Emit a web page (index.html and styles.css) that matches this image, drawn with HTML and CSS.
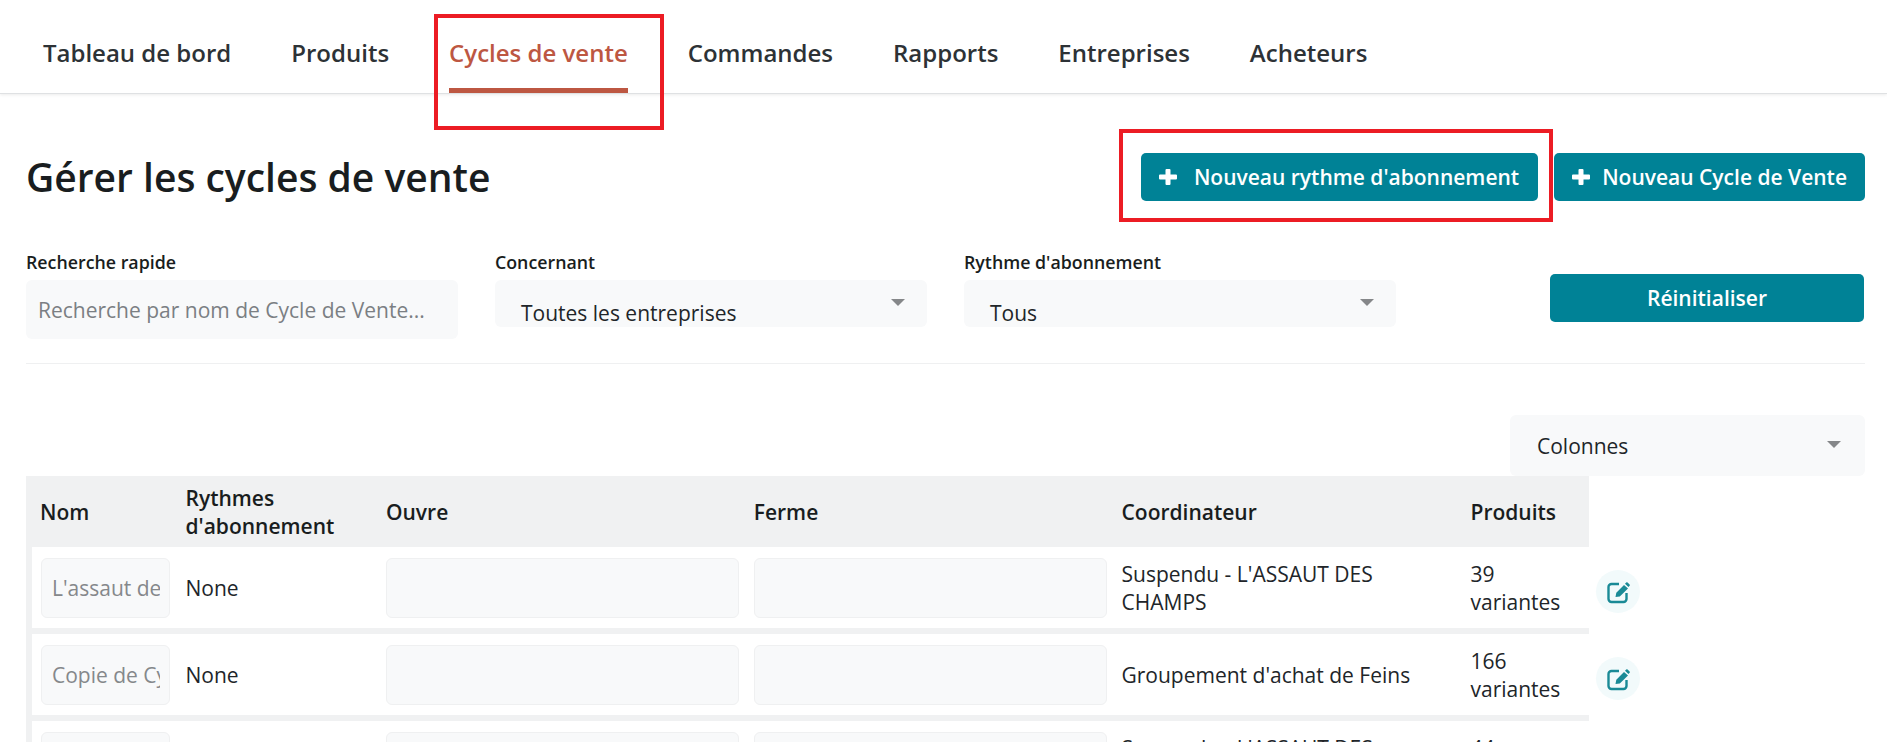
FILE: index.html
```html
<!DOCTYPE html>
<html lang="fr">
<head>
    <meta charset="UTF-8">
    <title>Gérer les cycles de vente</title>
    <link rel="stylesheet" href="styles.css">
</head>
<body>

    <nav class="topnav">
        <a class="nav-item">Tableau de bord</a>
        <a class="nav-item">Produits</a>
        <a class="nav-item active">Cycles de vente</a>
        <a class="nav-item">Commandes</a>
        <a class="nav-item">Rapports</a>
        <a class="nav-item">Entreprises</a>
        <a class="nav-item">Acheteurs</a>
    </nav>

    <main class="content">
        <div class="title-row">
            <h1>Gérer les cycles de vente</h1>
            <div class="actions">
                <button class="btn btn-rythme">
                    <svg class="plus" viewBox="0 0 18 16"><path d="M6.500 1a1 1 0 0 1 1-1h3a1 1 0 0 1 1 1v4.500H17a1 1 0 0 1 1 1v3a1 1 0 0 1-1 1h-5.500V15a1 1 0 0 1-1 1h-3a1 1 0 0 1-1-1v-4.500H1a1 1 0 0 1-1-1v-3a1 1 0 0 1 1-1h5.500z"/></svg>
                    Nouveau rythme d'abonnement
                </button>
                <button class="btn btn-cycle">
                    <svg class="plus" viewBox="0 0 18 16"><path d="M6.500 1a1 1 0 0 1 1-1h3a1 1 0 0 1 1 1v4.500H17a1 1 0 0 1 1 1v3a1 1 0 0 1-1 1h-5.500V15a1 1 0 0 1-1 1h-3a1 1 0 0 1-1-1v-4.500H1a1 1 0 0 1-1-1v-3a1 1 0 0 1 1-1h5.500z"/></svg>
                    Nouveau Cycle de Vente
                </button>
            </div>
        </div>

        <div class="filters">
            <div class="field">
                <label>Recherche rapide</label>
                <input class="search" type="text" placeholder="Recherche par nom de Cycle de Vente...">
            </div>
            <div class="field">
                <label>Concernant</label>
                <div class="select"><span>Toutes les entreprises</span><i class="arrow"></i></div>
            </div>
            <div class="field">
                <label>Rythme d'abonnement</label>
                <div class="select"><span>Tous</span><i class="arrow"></i></div>
            </div>
            <button class="btn btn-reset">Réinitialiser</button>
        </div>

        <hr class="sep">

        <div class="columns-row">
            <div class="select select-columns"><span>Colonnes</span><i class="arrow"></i></div>
        </div>

        <table class="cycles">
            <thead>
                <tr>
                    <th class="col-name">Nom</th>
                    <th class="col-rythme">Rythmes d'abonnement</th>
                    <th class="col-date">Ouvre</th>
                    <th class="col-date">Ferme</th>
                    <th class="col-coord">Coordinateur</th>
                    <th class="col-prod">Produits</th>
                    <th class="col-edit"></th>
                </tr>
            </thead>
            <tbody>
                <tr>
                    <td class="col-name"><input class="cell-input" type="text" value="L'assaut des champs"></td>
                    <td>None</td>
                    <td><input class="cell-input" type="text"></td>
                    <td><input class="cell-input" type="text"></td>
                    <td>Suspendu - L'ASSAUT DES CHAMPS</td>
                    <td>39 variantes</td>
                    <td class="col-edit">
                        <a class="edit"><svg viewBox="0 0 25 24"><path class="edit-box" d="M13 4H5.5A3 3 0 0 0 2.500 7v12a3 3 0 0 0 3 3h12a3 3 0 0 0 3-3v-6"/><path class="edit-pen" d="M9.500 17l.8-4.300L18 5l4 3.600-8.200 7.900zM19 3.800l1.200-1.200a1 1 0 0 1 1.400 0l2 1.800a1 1 0 0 1 0 1.400l-1.200 1.200z"/></svg></a>
                    </td>
                </tr>
                <tr>
                    <td class="col-name"><input class="cell-input" type="text" value="Copie de Cycle de vente"></td>
                    <td>None</td>
                    <td><input class="cell-input" type="text"></td>
                    <td><input class="cell-input" type="text"></td>
                    <td>Groupement d'achat de Feins</td>
                    <td>166 variantes</td>
                    <td class="col-edit">
                        <a class="edit"><svg viewBox="0 0 25 24"><path class="edit-box" d="M13 4H5.5A3 3 0 0 0 2.500 7v12a3 3 0 0 0 3 3h12a3 3 0 0 0 3-3v-6"/><path class="edit-pen" d="M9.500 17l.8-4.300L18 5l4 3.600-8.200 7.900zM19 3.800l1.200-1.200a1 1 0 0 1 1.400 0l2 1.800a1 1 0 0 1 0 1.400l-1.200 1.200z"/></svg></a>
                    </td>
                </tr>
                <tr>
                    <td class="col-name"><input class="cell-input" type="text" value="L'assaut des champs"></td>
                    <td>None</td>
                    <td><input class="cell-input" type="text"></td>
                    <td><input class="cell-input" type="text"></td>
                    <td>Suspendu - L'ASSAUT DES CHAMPS</td>
                    <td>44 variantes</td>
                    <td class="col-edit">
                        <a class="edit"><svg viewBox="0 0 25 24"><path class="edit-box" d="M13 4H5.5A3 3 0 0 0 2.500 7v12a3 3 0 0 0 3 3h12a3 3 0 0 0 3-3v-6"/><path class="edit-pen" d="M9.500 17l.8-4.300L18 5l4 3.600-8.200 7.900zM19 3.800l1.200-1.200a1 1 0 0 1 1.400 0l2 1.800a1 1 0 0 1 0 1.400l-1.200 1.200z"/></svg></a>
                    </td>
                </tr>
            </tbody>
        </table>
    </main>

    <!-- Cadres rouges d'annotation -->
    <div class="mark mark-nav"></div>
    <div class="mark mark-btn"></div>

</body>
</html>
```

FILE: styles.css
```css
html, body {
    height: 100%;
}
body {
    font-family: "Open Sans", sans-serif;
    font-size: 21px;
    line-height: 28px;
    color: #212529;
    background-color: #fff;
    margin: 0;
    overflow: hidden;
    position: relative;
}

/* Navigation */
.topnav {
    display: flex;
    gap: 60px;
    height: 93px;
    padding-left: 43px;
    border-bottom: 1px solid #dfe1e3;
    box-shadow: 0 1px 3px rgba(0,0,0,0.08);
}
.nav-item {
    font-size: 24px;
    font-weight: 600;
    color: #2d3236;
    padding-top: 38px;
    line-height: 30px;
    height: 50px;
}
.nav-item.active {
    color: #bd5742;
    border-bottom: 5px solid #bd5742;
}

.content {
    padding: 59px 22px 0 26px;
}

/* Titre et boutons */
.title-row {
    display: flex;
    justify-content: space-between;
    align-items: center;
}
h1 {
    font-size: 39px;
    font-weight: 600;
    line-height: 48px;
    color: #191d20;
    margin: 0;
}
.actions {
    display: flex;
    gap: 16px;
}
.btn {
    display: flex;
    align-items: center;
    justify-content: center;
    height: 48px;
    padding: 0 18px;
    background-color: #008296;
    color: #fff;
    border: none;
    border-radius: 5px;
    font-family: inherit;
    font-size: 21px;
    font-weight: 600;
}
.btn-rythme {
    gap: 17px;
    padding-right: 19px;
}
.btn-cycle {
    gap: 12px;
}
.plus {
    width: 18px;
    height: 16px;
    fill: #fff;
}

/* Filtres */
.filters {
    display: flex;
    gap: 37px;
    margin-top: 50px;
}
.field {
    width: 432px;
}
.field label {
    display: block;
    font-size: 17.800px;
    font-weight: 600;
    line-height: 22px;
    color: #191d20;
    margin-bottom: 7px;
}
.search {
    display: block;
    box-sizing: border-box;
    width: 100%;
    height: 59px;
    padding: 0 12px;
    background-color: #f8f9fa;
    border: none;
    border-radius: 6px;
    font-family: inherit;
    font-size: 21px;
    outline: none;
}
.search::placeholder {
    color: #7b7f83;
    opacity: 1;
}
.select {
    position: relative;
    box-sizing: border-box;
    height: 47px;
    padding: 19px 0 0 26px;
    background-color: #f8f9fa;
    border-radius: 6px;
    overflow: hidden;
}
.arrow {
    position: absolute;
    right: 22px;
    top: 19px;
    border-left: 7px solid transparent;
    border-right: 7px solid transparent;
    border-top: 7px solid #858789;
}
.btn-reset {
    width: 314px;
    margin: 23px 0 0 117px;
}
.sep {
    height: 1px;
    margin: 24px 0 51px;
    border: none;
    background-color: #eff0f1;
}

.columns-row {
    display: flex;
    justify-content: flex-end;
}
.select-columns {
    width: 355px;
    height: 61px;
    padding: 17px 0 0 27px;
}
.select-columns .arrow {
    top: 26px;
    right: 24px;
}

/* Tableau */
.cycles {
    table-layout: fixed;
    width: 1614px;
    border-collapse: separate;
    border-spacing: 0;
}
.cycles th {
    box-sizing: border-box;
    height: 71px;
    padding: 0 7.5px;
    background-color: #f0f1f2;
    font-size: 21px;
    font-weight: 600;
    text-align: left;
    color: #191d20;
}
.cycles td {
    box-sizing: border-box;
    height: 87px;
    padding: 0 7.5px;
    border-bottom: 6px solid #f0f1f2;
}
.cycles th.col-name {
    padding-left: 14px;
}
.cycles td.col-name {
    border-left: 6px solid #f0f1f2;
    padding: 0 8px 0 9px;
}
.col-name { width: 152px; }
.col-rythme { width: 200.5px; }
.col-date { width: 367.750px; }
.col-coord { width: 349px; }
.col-prod { width: 126px; }
.cycles th.col-edit {
    background: none;
}
.cycles td.col-edit {
    border-bottom: none;
    padding: 0 0 0 7px;
}
.cell-input {
    display: block;
    box-sizing: border-box;
    width: 100%;
    height: 60px;
    padding: 0 9px 0 10px;
    background-color: #f8f9fa;
    border: 1px solid #eff0f1;
    border-radius: 6px;
    font-family: inherit;
    font-size: 21px;
    color: #85888b;
    outline: none;
}
.edit {
    display: flex;
    align-items: center;
    justify-content: center;
    width: 44px;
    height: 43px;
    margin-top: 2px;
    border-radius: 50%;
    background-color: #f2fafb;
}
.edit svg {
    width: 25px;
    height: 24px;
}
.edit-box {
    fill: none;
    stroke: #1a8a96;
    stroke-width: 2.400;
}
.edit-pen {
    fill: #1a8a96;
}

/* Annotations */
.mark {
    position: absolute;
    box-sizing: border-box;
    border: 4px solid #ec1c24;
}
.mark-nav {
    left: 434px;
    top: 14px;
    width: 230px;
    height: 116px;
}
.mark-btn {
    left: 1119px;
    top: 129px;
    width: 434px;
    height: 93px;
}
```
